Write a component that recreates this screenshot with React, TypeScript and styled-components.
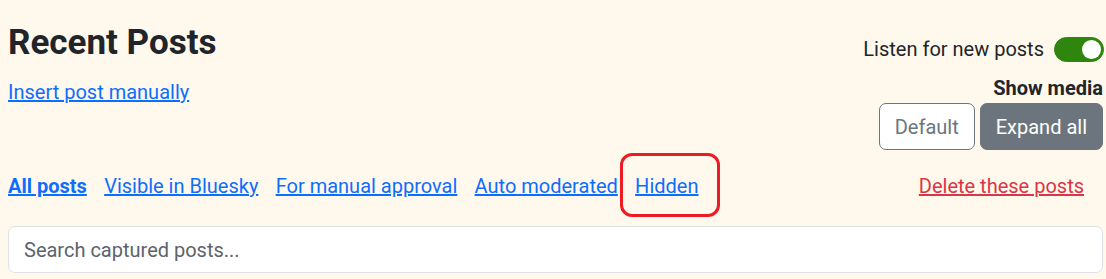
import { useState } from 'react';
import styled, { createGlobalStyle } from 'styled-components';

const GlobalStyle = createGlobalStyle`
  html, body {
    margin: 0;
    padding: 0;
    background: #fff8ec;
  }
  body {
    font-family: Roboto, "Liberation Sans", Arial, sans-serif;
    font-size: 20px;
    line-height: 1.5;
    color: #212529;
  }
  * {
    box-sizing: border-box;
  }
`;

const filters = [
  { label: 'All posts', active: true },
  { label: 'Visible in Bluesky' },
  { label: 'For manual approval' },
  { label: 'Auto moderated' },
  { label: 'Hidden', highlighted: true },
];

const App = () => {
  const [listening, setListening] = useState(true);
  const [media, setMedia] = useState<'default' | 'expand'>('expand');

  return (
    <>
      <GlobalStyle />
      <Page>
        <TopRow>
          <TitleBlock>
            <Title>Recent Posts</Title>
            <TextLink href="#">Insert post manually</TextLink>
          </TitleBlock>

          <Controls>
            <SwitchRow>
              <SwitchLabel htmlFor="listen">Listen for new posts</SwitchLabel>
              <Switch
                id="listen"
                type="button"
                $on={listening}
                onClick={() => setListening(!listening)}
                aria-pressed={listening}
              />
            </SwitchRow>
            <MediaLabel>Show media</MediaLabel>
            <ButtonGroup>
              <MediaButton $active={media === 'default'} onClick={() => setMedia('default')}>
                Default
              </MediaButton>
              <MediaButton $active={media === 'expand'} onClick={() => setMedia('expand')}>
                Expand all
              </MediaButton>
            </ButtonGroup>
          </Controls>
        </TopRow>

        <FilterBar>
          {filters.map((f) => (
            <FilterItem key={f.label}>
              <FilterLink href="#" $active={f.active}>
                {f.label}
              </FilterLink>
              {f.highlighted && <Highlight />}
            </FilterItem>
          ))}
          <DeleteLink href="#">Delete these posts</DeleteLink>
        </FilterBar>

        <SearchInput placeholder="Search captured posts..." />
      </Page>
    </>
  );
};

const Page = styled.div`
  padding: 21px 3px 0 8px;
`;

const TopRow = styled.div`
  display: flex;
  justify-content: space-between;
  align-items: flex-start;
`;

const TitleBlock = styled.div`
  display: flex;
  flex-direction: column;
  align-items: flex-start;
`;

const Title = styled.h2`
  margin: 1px 0 13px;
  font-size: 35px;
  font-weight: 700;
  line-height: 1.2;
`;

const TextLink = styled.a`
  color: #0d6efd;
  text-decoration: underline;
`;

const Controls = styled.div`
  display: flex;
  flex-direction: column;
  align-items: flex-end;
  margin-top: 13px;
`;

const SwitchRow = styled.div`
  display: flex;
  align-items: center;
  gap: 10px;
  height: 30px;
`;

const SwitchLabel = styled.label`
  cursor: pointer;
`;

const Switch = styled.button<{ $on: boolean }>`
  position: relative;
  width: 50px;
  height: 25px;
  margin-right: -1px;
  padding: 0;
  border-radius: 13px;
  border: 1px solid ${({ $on }) => ($on ? '#2f860f' : '#bbb')};
  background: ${({ $on }) => ($on ? '#2f860f' : '#fff')};
  cursor: pointer;

  &::after {
    content: '';
    position: absolute;
    top: 2px;
    left: ${({ $on }) => ($on ? '27px' : '2px')};
    width: 19px;
    height: 19px;
    border-radius: 50%;
    background: ${({ $on }) => ($on ? '#fff' : '#bbb')};
  }
`;

const MediaLabel = styled.div`
  margin-top: 9px;
  font-weight: 700;
`;

const ButtonGroup = styled.div`
  display: flex;
  gap: 5px;
`;

const MediaButton = styled.button<{ $active: boolean }>`
  font-family: inherit;
  font-size: 20px;
  line-height: 1.5;
  padding: 7.5px 15px;
  border-radius: 7px;
  border: 1px solid #6c757d;
  background: ${({ $active }) => ($active ? '#6c757d' : '#fff')};
  color: ${({ $active }) => ($active ? '#fff' : '#6c757d')};
  cursor: pointer;
`;

const FilterBar = styled.nav`
  display: flex;
  align-items: center;
  gap: 17.3px;
  margin-top: 21px;
`;

const FilterItem = styled.span`
  position: relative;
`;

const FilterLink = styled.a<{ $active?: boolean }>`
  color: #0d6efd;
  text-decoration: underline;
  font-weight: ${({ $active }) => ($active ? 700 : 400)};
`;

const Highlight = styled.span`
  position: absolute;
  top: -18px;
  left: -15px;
  right: -22px;
  bottom: -16px;
  border: 3.5px solid #ed1c24;
  border-radius: 12px;
  pointer-events: none;
`;

const DeleteLink = styled.a`
  margin-left: auto;
  margin-right: 19px;
  color: #dc3545;
  text-decoration: underline;
`;

const SearchInput = styled.input`
  display: block;
  width: 100%;
  margin-top: 25px;
  padding: 7.5px 15px;
  font-family: inherit;
  font-size: 20px;
  line-height: 1.5;
  color: #212529;
  background: #fff;
  border: 1px solid #dee2e6;
  border-radius: 7px;
  outline: none;

  &::placeholder {
    color: #5c636a;
  }
`;

export default App;
